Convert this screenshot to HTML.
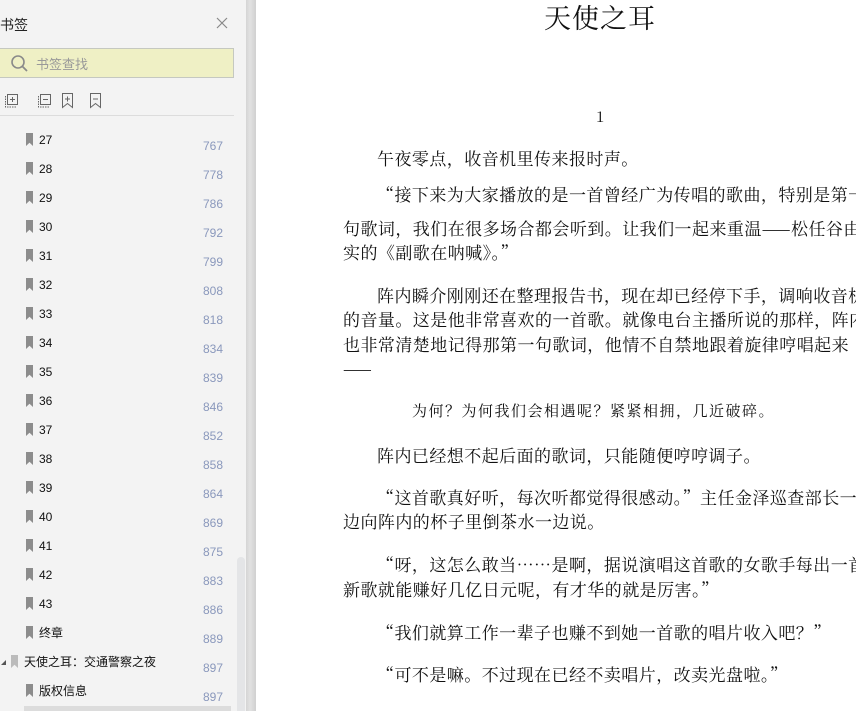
<!DOCTYPE html>
<html><head><meta charset="utf-8"><style>
*{margin:0;padding:0;box-sizing:border-box}
body{width:856px;height:711px;overflow:hidden;position:relative;background:#fff;font-family:"Liberation Sans","Noto Sans CJK SC",sans-serif}
#side{position:absolute;left:0;top:0;width:246px;height:711px;background:#f3f3f3}
#gut{position:absolute;left:246px;top:0;width:10px;height:711px;background:linear-gradient(90deg,#d4d4d4,#e2e2e2 40%,#d0d0d0)}
.a{position:absolute;white-space:nowrap}
.bm{position:absolute;width:7px;height:13px;background:#8c8c8c;clip-path:polygon(0 0,100% 0,100% 100%,50% 75%,0 100%)}
.lb{position:absolute;font-size:12px;color:#111;line-height:14px}
.nm{position:absolute;font-size:12px;color:#8a98bc}
.t{position:absolute;white-space:nowrap;font-family:"Noto Serif CJK SC","Liberation Serif",serif;font-size:17px;letter-spacing:0.45px;color:#111;line-height:24px}
</style></head><body>
<div id="side">
 <div class="a" style="left:0;top:15px;font-size:14px;color:#222">书签</div>
 <svg class="a" style="left:216px;top:17px" width="12" height="12"><path d="M1 1L11 11M11 1L1 11" stroke="#888" stroke-width="1.2"/></svg>
 <div class="a" style="left:0;top:48px;width:234px;height:30px;background:#eff0c5;border:1px solid #c5c8c0;border-left:none"></div>
 <svg class="a" style="left:10px;top:54px" width="20" height="20"><circle cx="8" cy="8" r="6" fill="none" stroke="#8a8a8a" stroke-width="1.6"/><path d="M12.5 12.5L17 17" stroke="#8a8a8a" stroke-width="1.8"/></svg>
 <div class="a" style="left:36px;top:54px;font-size:13px;color:#999">书签查找</div>
 <svg class="a" style="left:4px;top:92px" width="100" height="18" fill="none" stroke="#666" stroke-width="1">
  <rect x="3.5" y="2.5" width="10" height="10"/><path d="M1.5 4v11h11" stroke-dasharray="1.5 1"/><path d="M8.5 5v5M6 7.5h5"/>
  <rect x="36.5" y="2.5" width="10" height="10"/><path d="M34.5 4v11h11" stroke-dasharray="1.5 1"/><path d="M39 7.5h5"/>
  <path d="M58.5 1.5h10v14l-5-4-5 4z"/><path d="M63.5 4.5v5M61 7h5"/>
  <path d="M86.5 1.5h10v14l-5-4-5 4z"/><path d="M89 7h5"/>
 </svg>
 <div class="a" style="left:0;top:115px;width:234px;height:1px;background:#dcdcdc"></div>
 <div class="a" style="left:237px;top:557px;width:8px;height:154px;background:#e4e5e7;border-radius:4px 4px 0 0"></div>
 <div class="a" style="left:24px;top:706px;width:207px;height:5px;background:#dcdcdc"></div>
</div>
<div id="gut"></div>
<div id="rows"></div>
<script>
var d=[["27",767],["28",778],["29",786],["30",792],["31",799],["32",808],["33",818],["34",834],["35",839],["36",846],["37",852],["38",858],["39",864],["40",869],["41",875],["42",883],["43",886],["终章",889]];
var h="";
d.forEach(function(r,i){var y=133+i*29;
h+='<div class="bm" style="left:26px;top:'+y+'px"></div><div class="lb a" style="left:39px;top:'+(y)+'px">'+r[0]+'</div><div class="nm a" style="right:633px;top:'+(y+6)+'px">'+r[1]+'</div>';});
var y=133+18*29;
h+='<div class="a" style="left:1px;top:'+(y+5)+'px;width:0;height:0;border-left:5px solid transparent;border-bottom:5px solid #555"></div><div class="bm" style="left:11px;top:'+y+'px;background:#bbb"></div><div class="lb a" style="left:24px;top:'+(y)+'px">天使之耳：交通警察之夜</div><div class="nm a" style="right:633px;top:'+(y+6)+'px">897</div>';
y+=29;
h+='<div class="bm" style="left:26px;top:'+y+'px"></div><div class="lb a" style="left:39px;top:'+(y)+'px">版权信息</div><div class="nm a" style="right:633px;top:'+(y+6)+'px">897</div>';
document.getElementById("rows").innerHTML=h;
</script>
<div class="t" style="left:544px;top:1px;font-size:27px;line-height:32px;letter-spacing:1px">天使之耳</div>
<div class="t" style="left:596px;top:105px;font-size:15px">1</div>
<div class="t" style="left:377px;top:146px">午夜零点，收音机里传来报时声。</div>
<div class="t" style="left:377px;top:182px">“接下来为大家播放的是一首曾经广为传唱的歌曲，特别是第一</div>
<div class="t" style="left:343px;top:216px">句歌词，我们在很多场合都会听到。让我们一起来重温——松任谷由</div>
<div class="t" style="left:343px;top:240px">实的《副歌在呐喊》。”</div>
<div class="t" style="left:377px;top:283px">阵内瞬介刚刚还在整理报告书，现在却已经停下手，调响收音机</div>
<div class="t" style="left:343px;top:307px">的音量。这是他非常喜欢的一首歌。就像电台主播所说的那样，阵内</div>
<div class="t" style="left:343px;top:332px">也非常清楚地记得那第一句歌词，他情不自禁地跟着旋律哼唱起来</div>
<div class="t" style="left:343px;top:356px">——</div>
<div class="t" style="left:412px;top:399px;font-size:15px;letter-spacing:1.5px">为何？为何我们会相遇呢？紧紧相拥，几近破碎。</div>
<div class="t" style="left:377px;top:443px">阵内已经想不起后面的歌词，只能随便哼哼调子。</div>
<div class="t" style="left:377px;top:485px">“这首歌真好听，每次听都觉得很感动。”主任金泽巡查部长一</div>
<div class="t" style="left:343px;top:509px">边向阵内的杯子里倒茶水一边说。</div>
<div class="t" style="left:377px;top:552px">“呀，这怎么敢当……是啊，据说演唱这首歌的女歌手每出一首</div>
<div class="t" style="left:343px;top:577px">新歌就能赚好几亿日元呢，有才华的就是厉害。”</div>
<div class="t" style="left:377px;top:620px">“我们就算工作一辈子也赚不到她一首歌的唱片收入吧？”</div>
<div class="t" style="left:377px;top:662px">“可不是嘛。不过现在已经不卖唱片，改卖光盘啦。”</div>
</body></html>
